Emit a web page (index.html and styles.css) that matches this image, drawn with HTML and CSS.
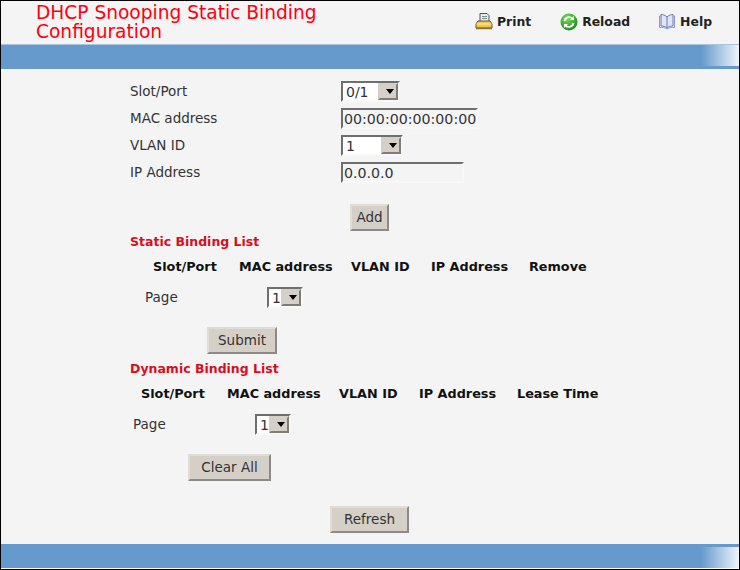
FILE: index.html
```html
<!DOCTYPE html>
<html lang="en">
<head>
<meta charset="utf-8">
<title>DHCP Snooping Static Binding Configuration</title>
<link rel="stylesheet" href="styles.css">
</head>
<body>
<div class="page">
  <header class="header">
    <h1 class="title">DHCP Snooping Static Binding Configuration</h1>
    <nav class="tools">
      <a class="tool tool-print">
        <svg width="18" height="17" viewBox="0 0 18 17"><path d="M5 .5h7l2 2v7H5z" fill="#e8eef0" stroke="#4a5660"/><path d="M7 3.500h5M7 5.500h5" stroke="#7b8a94"/><path d="M3 8h12l2 3v4H1v-4z" fill="#f3c64c" stroke="#5c5238"/><path d="M1.500 11h15" stroke="#fdf0b0"/><path d="M1 15.500h16" stroke="#8a7430" stroke-width="1.500"/></svg>
        Print
      </a>
      <a class="tool tool-reload">
        <svg width="18" height="18" viewBox="0 0 18 18"><defs><radialGradient id="g" cx="40%" cy="30%" r="75%"><stop offset="0" stop-color="#7fdc5c"/><stop offset="1" stop-color="#128a1a"/></radialGradient></defs><circle cx="9" cy="9" r="8.500" fill="url(#g)"/><path d="M4.500 8a4.700 4.700 0 0 1 8-2.500M13.500 10a4.700 4.700 0 0 1-8 2.500" fill="none" stroke="#fff" stroke-width="1.800"/><path d="M14 3v4h-4zM4 15v-4h4z" fill="#fff"/></svg>
        Reload
      </a>
      <a class="tool tool-help">
        <svg width="18" height="17" viewBox="0 0 18 17"><path d="M9 4C7 2 4.500 1.500 3 1.500V13c2 0 4.500.5 6 2 1.500-1.500 4-2 6-2V1.500C13.500 1.500 11 2 9 4z" fill="#dfe6f6" stroke="#6a78bc"/><path d="M3 3H1.500v11.500c2.500-.3 5.500 0 7.500 1.500 2-1.500 5-1.800 7.500-1.500V3H15" fill="none" stroke="#8d98cf"/><path d="M9 4v11" stroke="#6a78bc"/></svg>
        Help
      </a>
    </nav>
  </header>
  <div class="bar bar-top"></div>

  <main class="content">
    <form class="fields">
      <label class="field-label">Slot/Port</label>
      <span class="select select-slot"><select><option>0/1</option></select></span>
      <label class="field-label">MAC address</label>
      <input class="text text-mac" value="00:00:00:00:00:00">
      <label class="field-label">VLAN ID</label>
      <span class="select select-vlan"><select><option>1</option></select></span>
      <label class="field-label">IP Address</label>
      <input class="text text-ip" value="0.0.0.0">
    </form>
    <div class="action action-add"><button class="btn btn-add" type="button">Add</button></div>

    <section class="list list-static">
      <h2 class="list-title">Static Binding List</h2>
      <div class="columns columns-static">
        <span>Slot/Port</span><span>MAC address</span><span>VLAN ID</span><span>IP Address</span><span>Remove</span>
      </div>
      <div class="pager pager-static">
        <span class="pager-label">Page</span>
        <span class="select select-page"><select><option>1</option></select></span>
      </div>
      <div class="action action-submit"><button class="btn btn-submit" type="button">Submit</button></div>
    </section>

    <section class="list list-dynamic">
      <h2 class="list-title">Dynamic Binding List</h2>
      <div class="columns columns-dynamic">
        <span>Slot/Port</span><span>MAC address</span><span>VLAN ID</span><span>IP Address</span><span>Lease Time</span>
      </div>
      <div class="pager pager-dynamic">
        <span class="pager-label">Page</span>
        <span class="select select-page"><select><option>1</option></select></span>
      </div>
      <div class="action action-clear"><button class="btn btn-clear" type="button">Clear All</button></div>
    </section>

    <div class="action action-refresh"><button class="btn btn-refresh" type="button">Refresh</button></div>
  </main>

  <div class="bar bar-bottom"></div>
</div>
</body>
</html>
```
FILE: styles.css
```css
* { box-sizing: border-box; }
html, body { margin: 0; padding: 0; height: 100%; background: #000; }
body { font-family: "DejaVu Sans", Verdana, sans-serif; font-size: 13.5px; color: #333; overflow: hidden; }
.page {
  width: 738px; height: 568px; margin: 1px 0 0 1px;
  background: #f4f4f4; display: flex; flex-direction: column;
  border-bottom: 1px solid #fff;
}
.header { height: 43px; display: flex; justify-content: space-between; flex: none; }
.title {
  margin: 0; padding: 2px 0 0 35px; width: 340px;
  font-size: 18.6px; line-height: 19px; font-weight: normal; color: #fa0010;
}
.tools { display: flex; padding: 12px 27px 0 0; }
.tool { display: flex; align-items: flex-start; gap: 4px; font-size: 12.4px; line-height: 18px; font-weight: bold; color: #222; }
.tool svg { flex: none; }
.tool-print { margin-right: 29px; }
.tool-reload { margin-right: 28px; }
.bar { height: 25px; flex: none; background-color: #6699cc; background-repeat: no-repeat; }
.bar-top {
  border-top: 1px solid #a9c4e0;
  background-image: linear-gradient(to right, #6699cc calc(100% - 38px), #eef5fb 100%);
  background-size: 100% 21px;
  background-position: top;
}
.bar-bottom {
  height: 24px;
  background-image: linear-gradient(to right, #6699cc calc(100% - 38px), #eef5fb 100%);
  background-size: 100% 21px;
  background-position: bottom;
}
.content { flex: 1; padding-top: 9px; }
.fields {
  display: grid; grid-template-columns: 211px auto; justify-content: start;
  margin-left: 129px; grid-auto-rows: 27px; align-items: center; justify-items: start;
}
.field-label { line-height: 16px; padding-bottom: 2px; }
.select {
  display: inline-block; position: relative; height: 21px;
  border: 2px solid; border-color: #6e6e6e #f8f8f8 #f8f8f8 #6e6e6e; background: #fff;
}
.select select {
  appearance: none; display: block; width: 100%; height: 100%;
  border: 0; background: transparent; padding: 0 0 0 3px; margin: 0;
  font: 14px "DejaVu Sans", sans-serif; color: #333; border-radius: 0;
}
.select::after {
  content: ""; position: absolute; top: 0; right: 0; bottom: 0; width: 16px;
  background: #d4d0c8; border: 2px outset #d4d0c8; pointer-events: none;
}
.select::before {
  content: ""; position: absolute; z-index: 1; top: 6px; right: 4px;
  border: 4px solid transparent; border-top: 5px solid #000; border-bottom: 0;
  pointer-events: none;
}
.select-slot { width: 59px; }
.select-vlan { width: 62px; }
.select-page { width: 36px; }
.text {
  height: 21px; border: 2px solid; border-color: #6e6e6e #f8f8f8 #f8f8f8 #6e6e6e;
  background: #f4f4f4; padding: 0 0 0 1px; margin: 0;
  font: 14.2px "DejaVu Sans", sans-serif; color: #333; border-radius: 0;
}
.text-mac { width: 137px; }
.text-ip { width: 123px; }
.action { display: flex; }
.action-add { margin: 18px 0 0 349px; }
.btn {
  height: 27px; padding: 0 0 2px; margin: 0;
  background: #d4d0c8; border: 2px outset #e0ddd6; border-radius: 0;
  font: 13.5px "DejaVu Sans", sans-serif; color: #333;
}
.btn-add { width: 39px; }
.btn-submit { width: 70px; }
.btn-clear { width: 83px; }
.btn-refresh { width: 79px; }
.list-static { margin-top: 2px; }
.list-dynamic { margin-top: 6px; }
.list-title { margin: 0 0 0 129px; font-size: 12.5px; line-height: 17px; font-weight: bold; color: #d3101c; }
.columns {
  display: grid; grid-template-columns: 86px 112px 80px 98px auto; justify-content: start;
  font-weight: bold; font-size: 12.8px; line-height: 16px; color: #111;
}
.columns-static { margin: 9px 0 0 152px; }
.columns-dynamic { margin: 9px 0 0 140px; }
.pager { display: flex; align-items: center; height: 21px; }
.pager-static { margin: 12px 0 0 144px; }
.pager-dynamic { margin: 12px 0 0 132px; }
.pager-label { width: 122px; padding-bottom: 2px; }
.action-submit { margin: 19px 0 0 206px; }
.action-clear { margin: 19px 0 0 187px; }
.action-refresh { margin: 25px 0 0 329px; }
```
